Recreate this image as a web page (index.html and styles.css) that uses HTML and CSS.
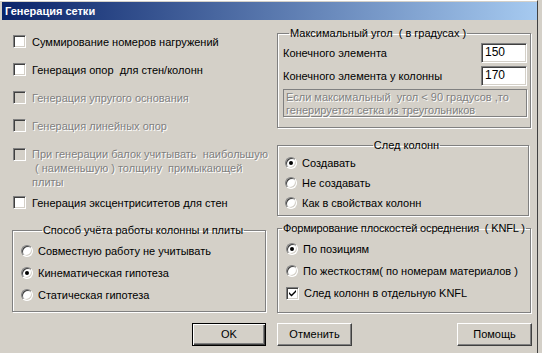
FILE: index.html
```html
<!DOCTYPE html>
<html>
<head>
<meta charset="utf-8">
<title>Генерация сетки</title>
<link rel="stylesheet" href="styles.css">
</head>
<body>
<div class="window">
  <div class="titlebar">Генерация сетки</div>
  <div class="client">
    <div class="cols">
      <div class="left">
        <div class="opt r1"><span class="box"></span><span>Суммирование номеров нагружений</span></div>
        <div class="opt"><span class="box"></span><span>Генерация опор&nbsp; для стен/колонн</span></div>
        <div class="opt off"><span class="box"></span><span>Генерация упругого основания</span></div>
        <div class="opt off"><span class="box"></span><span>Генерация линейных опор</span></div>
        <div class="opt off multi"><span class="box"></span><span>При генерации балок учитывать&nbsp; наибольшую<br>&nbsp;( наименьшую ) толщину&nbsp; примыкающей<br>плиты</span></div>
        <div class="opt"><span class="box"></span><span>Генерация эксцентриситетов для стен</span></div>

        <fieldset class="group g-left">
          <legend class="center">Способ учёта работы колонны и плиты</legend>
          <div class="radio-row"><span class="radio"></span><span>Совместную работу не учитывать</span></div>
          <div class="radio-row"><span class="radio on"></span><span>Кинематическая гипотеза</span></div>
          <div class="radio-row"><span class="radio"></span><span>Статическая гипотеза</span></div>
        </fieldset>
      </div>

      <div class="right">
        <fieldset class="group g-angle">
          <legend>Максимальный угол&nbsp; ( в градусах )</legend>
          <div class="field-row"><span>Конечного элемента</span><span class="edit">150</span></div>
          <div class="field-row"><span>Конечного элемента у колонны</span><span class="edit">170</span></div>
          <div class="note">Если максимальный&nbsp; угол &lt; 90 градусов ,то<br>генерируется сетка из треугольников</div>
        </fieldset>

        <fieldset class="group g-trace">
          <legend class="center">След колонн</legend>
          <div class="radio-row"><span class="radio on"></span><span>Создавать</span></div>
          <div class="radio-row"><span class="radio"></span><span>Не создавать</span></div>
          <div class="radio-row"><span class="radio"></span><span>Как в свойствах колонн</span></div>
        </fieldset>

        <fieldset class="group g-knfl">
          <legend>Формирование плоскостей осреднения&nbsp; ( KNFL )</legend>
          <div class="radio-row"><span class="radio on"></span><span>По позициям</span></div>
          <div class="radio-row"><span class="radio"></span><span>По жесткостям( по номерам материалов )</span></div>
          <div class="radio-row"><span class="box checked"><svg width="9" height="9" viewBox="0 0 9 9"><path d="M1 3 L3.5 5.5 L8 1 L8 3 L3.5 7.5 L1 5 Z" fill="#000"/></svg></span><span>След колонн в отдельную KNFL</span></div>
        </fieldset>
      </div>
    </div>

    <div class="buttons">
      <div class="btn default">OK</div>
      <div class="btn">Отменить</div>
      <div class="spacer"></div>
      <div class="btn">Помощь</div>
    </div>
  </div>
</div>
</body>
</html>
```

FILE: styles.css
```css
* {
  box-sizing: border-box;
  margin: 0;
  padding: 0;
}

body {
  background-color: #d4d0c8;
  font-family: "Liberation Sans", Arial, sans-serif;
  font-size: 11px;
  color: #000;
  width: 542px;
  height: 353px;
  overflow: hidden;
}

.window {
  width: 538px;
  height: 353px;
  border-right: 1px solid #404040;
  border-top: 1px solid #ffffff;
  padding: 1px 0 0 2px;
}

.titlebar {
  height: 18px;
  line-height: 18px;
  padding-left: 3px;
  color: #fff;
  font-weight: bold;
  font-size: 11px;
  background: linear-gradient(to right, #0a246a, #a6caf0);
}

.cols {
  display: grid;
  grid-template-columns: 268px 254px;
  column-gap: 7px;
  height: 299px;
}

/* левая колонка */
.left {
  padding: 15px 0 0 10px;
}

.opt {
  display: flex;
  align-items: center;
  gap: 6px;
  height: 13px;
  margin: 0 0 15px 1px;
  white-space: nowrap;
}

.opt.multi {
  align-items: flex-start;
  height: 49px;
  margin-bottom: 0;
  line-height: 14px;
}

.opt.multi .box {
  margin-top: 1px;
}

.off {
  color: #808080;
  text-shadow: 1px 1px 0 #fff;
}

.box {
  flex: none;
  width: 13px;
  height: 13px;
  background: #fff;
  border-top: 1px solid #808080;
  border-left: 1px solid #808080;
  border-right: 1px solid #fff;
  border-bottom: 1px solid #fff;
  box-shadow: inset 1px 1px 0 #404040, inset -1px -1px 0 #d4d0c8;
  display: flex;
  align-items: center;
  justify-content: center;
}

.off .box {
  background: #d4d0c8;
}

/* групповые рамки */
.group {
  border: 1px solid #808080;
  box-shadow: inset 1px 1px 0 #fff, 1px 1px 0 #fff;
  min-width: 0;
}

.group legend {
  line-height: 13px;
  padding: 0 1px;
  margin-left: 0;
  white-space: nowrap;
}

.group legend.center {
  margin: 0 auto;
}

.g-left {
  width: 254px;
  height: 88px;
  margin: 14px 0 0 0;
  padding: 8px 0 0 8px;
}

.radio-row {
  display: flex;
  align-items: center;
  gap: 5px;
  height: 12px;
  margin-bottom: 10px;
  white-space: nowrap;
}

.radio {
  flex: none;
  width: 12px;
  height: 12px;
  border-radius: 50%;
  background: #fff;
  border: 1px solid;
  border-color: #808080 #fff #fff #808080;
  box-shadow: inset 1px 1px 0 #404040, inset -1px -1px 0 #d4d0c8;
  display: flex;
  align-items: center;
  justify-content: center;
}

.radio.on::after {
  content: "";
  width: 4px;
  height: 4px;
  border-radius: 50%;
  background: #000;
}

/* правая колонка */
.right {
  padding-top: 7px;
}

.g-angle {
  height: 101px;
  padding: 3px 3px 0 5px;
}

.g-angle legend {
  margin-left: 6px;
}

.field-row {
  display: flex;
  justify-content: space-between;
  align-items: center;
  height: 20px;
  margin-bottom: 3px;
  white-space: nowrap;
}

.edit {
  width: 46px;
  height: 20px;
  line-height: 16px;
  padding-left: 3px;
  background: #fff;
  border-top: 1px solid #808080;
  border-left: 1px solid #808080;
  border-right: 1px solid #fff;
  border-bottom: 1px solid #fff;
  box-shadow: inset 1px 1px 0 #404040, inset -1px -1px 0 #d4d0c8;
  font-size: 12px;
}

.note {
  margin-top: 3px;
  width: 244px;
  height: 28px;
  border: 1px solid #808080;
  box-shadow: 1px 1px 0 #fff;
  padding: 1px 2px;
  line-height: 13px;
  color: #808080;
  text-shadow: 1px 1px 0 #fff;
  white-space: nowrap;
}

.g-trace {
  width: 252px;
  height: 77px;
  margin-top: 11px;
  padding: 5px 0 0 7px;
}

.g-trace .radio-row {
  margin-bottom: 8px;
}

.g-knfl {
  height: 91px;
  margin-top: 6px;
  padding: 8px 0 0 8px;
}

.g-knfl legend {
  margin-left: -4px;
  letter-spacing: -0.15px;
}

.g-knfl .radio-row {
  margin-bottom: 10px;
}

/* кнопки */
.buttons {
  display: flex;
  gap: 11px;
  margin: 4px 0 0 190px;
  width: 340px;
}

.spacer {
  flex: 1;
}

.btn {
  width: 75px;
  height: 23px;
  line-height: 21px;
  text-align: center;
  border: 1px solid;
  border-color: #fff #404040 #404040 #fff;
  box-shadow: inset -1px -1px 0 #808080;
}

.btn.default {
  width: 74px;
  border: 1px solid #000;
  box-shadow: inset 1px 1px 0 #fff, inset -1px -1px 0 #404040, inset -2px -2px 0 #808080;
}
```
